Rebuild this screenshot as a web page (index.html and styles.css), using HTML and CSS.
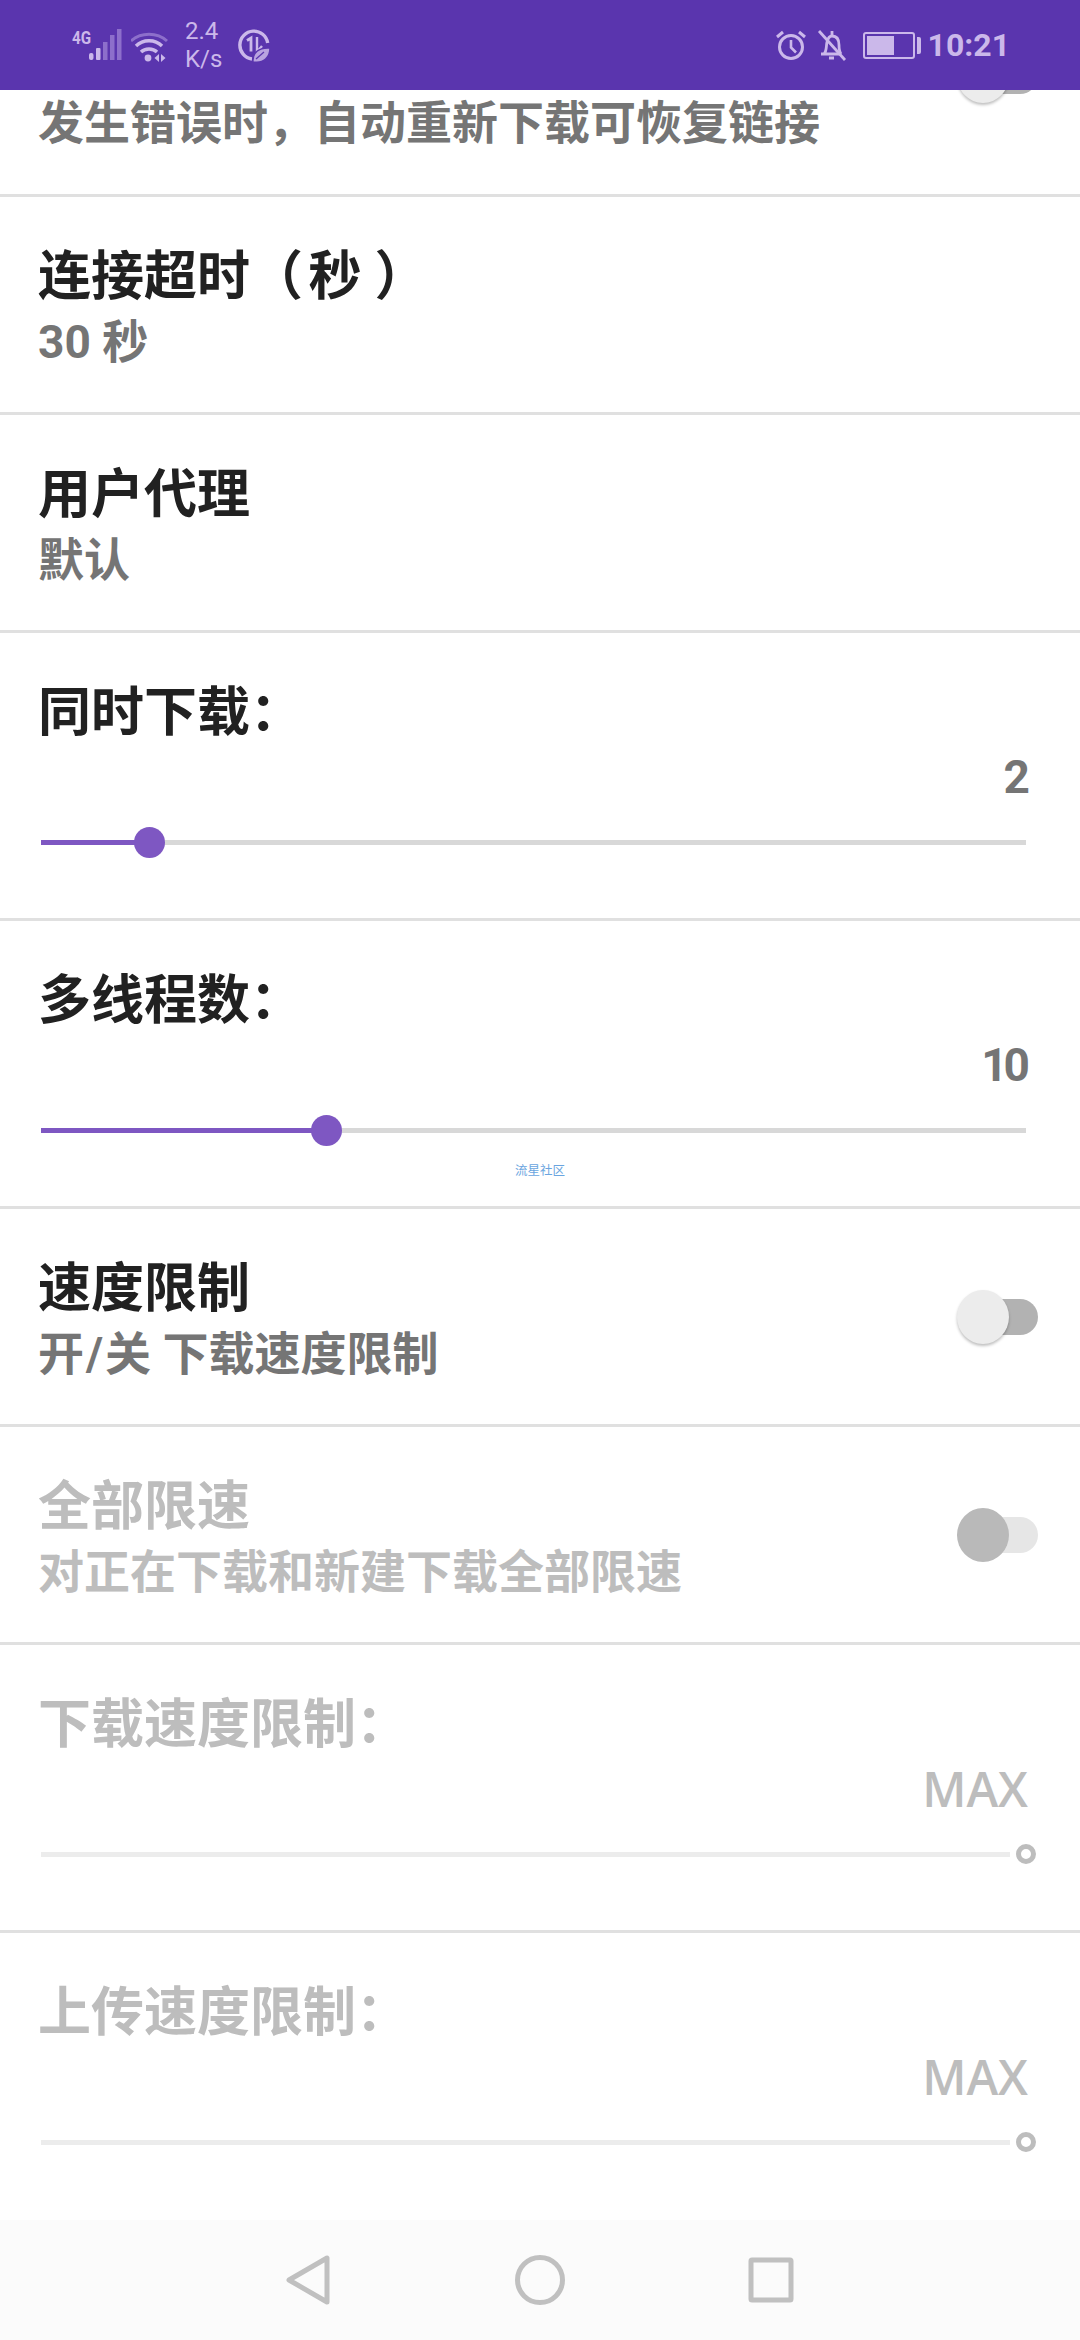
FILE: index.html
```html
<!DOCTYPE html>
<html lang="zh-CN">
<head>
  <meta charset="UTF-8">
  <title>下载设置</title>
  <meta name="viewport" content="width=device-width,initial-scale=1">
  <link rel="stylesheet" href="styles.css">
</head>
<body>
  <header class="status">
    <div class="status-left">
      <span class="net">4G</span>
      <svg class="signal" width="34" height="34" viewBox="0 0 34 34">
        <rect x="0" y="25" width="4.500" height="7" rx="2" fill="#cbb8ea"/>
        <rect x="7" y="20" width="4.500" height="12" rx="1" fill="#cbb8ea"/>
        <rect x="14" y="14" width="4.500" height="18" fill="#8d6fcb"/>
        <rect x="21" y="7" width="4.500" height="25" fill="#8d6fcb"/>
        <rect x="28" y="1" width="4.500" height="31" fill="#8d6fcb"/>
      </svg>
      <svg class="wifi" width="38" height="34" viewBox="0 0 38 34" fill="none">
        <path d="M0 11C10 2 26 2 36 11" stroke="#8d6fcb" stroke-width="3"/>
        <path d="M5 16C12 9 24 9 31 16" stroke="#cbb8ea" stroke-width="3.400"/>
        <path d="M10 22C14 18 22 18 26 22" stroke="#cbb8ea" stroke-width="3.400"/>
        <circle cx="17" cy="28" r="3.400" fill="#cbb8ea"/>
        <path d="M28 24v8l-4.500-4zM30 24v8l4.500-4z" fill="#cbb8ea"/>
      </svg>
      <div class="speed"><span>2.4</span><span>K/s</span></div>
      <svg class="saver" width="32" height="34" viewBox="0 0 32 34" fill="none">
        <path d="M14 30A14 14 0 1 1 29.700 14" stroke="#cbb8ea" stroke-width="3.400"/>
        <path d="M9 11.500l4-2.500v13.500" stroke="#cbb8ea" stroke-width="2.800"/>
        <path d="M19 8v15l5-6" stroke="#cbb8ea" stroke-width="2.400"/>
        <path d="M15 33c-1-9 6-15 17-14 0 9-6 16-17 14z" fill="#b9a3e0" stroke="#5a35ae" stroke-width="1.500"/>
        <path d="M18 30l8-7" stroke="#5a35ae" stroke-width="1.200"/>
      </svg>
    </div>
    <div class="status-right">
      <svg width="32" height="32" viewBox="0 0 32 32" fill="none" stroke="#cbb8ea">
        <circle cx="16" cy="18" r="11.500" stroke-width="3"/>
        <path d="M16 11v7.500l5 5" stroke-width="2.600"/>
        <path d="M2 8l6-5M30 8l-6-5" stroke-width="3"/>
      </svg>
      <svg class="bell" width="30" height="32" viewBox="0 0 30 32" fill="none" stroke="#cbb8ea">
        <path d="M4 25h20M7 25c3-3 2-8 3-12 1-4 3-6 5-6 5 0 7 4 7 9 0 4 0 6 2 9" stroke-width="2.800"/>
        <path d="M12 29h5M15 2v4" stroke-width="2.800"/>
        <path d="M2 2l26 29" stroke-width="2.800"/>
      </svg>
      <div class="battery"><div class="battery-body"><div class="battery-level"></div></div><div class="battery-nub"></div></div>
      <span class="clock">10:21</span>
    </div>
  </header>

  <main class="list">
    <section class="row row-cut">
      <div class="row-text"><p class="sub">发生错误时，自动重新下载可恢复链接</p></div>
      <div class="switch switch-off"></div>
    </section>
    <section class="row">
      <div class="row-text"><h2 class="title">连接超时（&#8202;秒 ）</h2><p class="sub">30 秒</p></div>
    </section>
    <section class="row">
      <div class="row-text"><h2 class="title">用户代理</h2><p class="sub">默认</p></div>
    </section>
    <section class="slider-row">
      <h2 class="title">同时下载：</h2>
      <div class="value">2</div>
      <div class="track"><div class="fill" style="width:11.1%"></div></div>
    </section>
    <section class="slider-row">
      <h2 class="title">多线程数：</h2>
      <div class="value">10</div>
      <div class="track"><div class="fill" style="width:29%"></div></div>
      <span class="watermark">流星社区</span>
    </section>
    <section class="row">
      <div class="row-text"><h2 class="title">速度限制</h2><p class="sub">开<span class="slash">/</span>关 下载速度限制</p></div>
      <div class="switch switch-off"></div>
    </section>
    <section class="row disabled">
      <div class="row-text"><h2 class="title">全部限速</h2><p class="sub">对正在下载和新建下载全部限速</p></div>
      <div class="switch switch-dim"></div>
    </section>
    <section class="slider-row disabled">
      <h2 class="title">下载速度限制：</h2>
      <div class="value value-max">MAX</div>
      <div class="track track-end"><div class="ring"></div></div>
    </section>
    <section class="slider-row disabled last">
      <h2 class="title">上传速度限制：</h2>
      <div class="value value-max">MAX</div>
      <div class="track track-end"><div class="ring"></div></div>
    </section>
  </main>

  <nav class="navbar">
    <svg width="50" height="50" viewBox="0 0 50 50" fill="none" stroke="#c0c0c0" stroke-width="5" stroke-linejoin="round">
      <path d="M5 25L43 3V47z"/>
    </svg>
    <svg width="50" height="50" viewBox="0 0 50 50" fill="none" stroke="#c0c0c0" stroke-width="5">
      <circle cx="25" cy="25" r="22.500"/>
    </svg>
    <svg width="50" height="50" viewBox="0 0 50 50" fill="none" stroke="#c0c0c0" stroke-width="5" stroke-linejoin="round">
      <rect x="5" y="5" width="40" height="40" rx="1"/>
    </svg>
  </nav>
</body>
</html>
```

FILE: styles.css
```css
*{box-sizing:border-box}
html,body{margin:0;padding:0}
body{width:1080px;height:2340px;display:flex;flex-direction:column;background:#fff;overflow:hidden;font-family:Roboto,"Noto Sans CJK SC",sans-serif}

.status{height:90px;flex:none;background:#5a35ae;color:#cbb8ea;display:flex;align-items:center;justify-content:space-between;padding:0 70px 0 72px}
.status-left,.status-right{display:flex;align-items:center}
.net{font-size:19px;font-weight:700;line-height:18px;width:17px;margin-top:-14px;transform:scaleX(.8);transform-origin:left center}
.wifi{margin:4px 0 0 8px}
.speed{display:flex;flex-direction:column;font-size:24px;line-height:28px;margin-left:16px;width:36px}
.saver{margin:2px 0 0 17px}
.bell{margin-left:10px}
.battery{display:flex;align-items:center;margin-left:16px}
.battery-body{width:52px;height:27px;border:2px solid #cbb8ea;border-radius:3px;padding:2px}
.battery-level{width:27px;height:100%;background:#cbb8ea}
.battery-nub{width:4px;height:17px;background:#cbb8ea;border-radius:0 2px 2px 0;margin-left:2px}
.clock{font-size:32px;font-weight:700;margin-left:7px}

.list{flex:1;overflow:hidden}
.row{height:218px;border-bottom:3px solid #e0e0e0;display:flex;align-items:center;justify-content:space-between;padding:0 42px 0 38px}
.row-text{padding-top:6px}
.row-cut{height:107px;overflow:hidden;align-items:flex-start}
.row-cut .row-text{padding-top:3px}
.row-cut .switch{margin-top:-41px}
.title{margin:0;font-size:53px;line-height:70px;font-weight:700;color:#212121;white-space:pre}
.sub{margin:-1px 0 0;font-size:46px;line-height:62px;font-weight:700;color:#757575}
.slash{padding:0 2px}

.switch{width:81px;height:54px;position:relative;flex:none}
.switch::before{content:"";position:absolute;right:0;top:9px;width:66px;height:36px;border-radius:18px}
.switch::after{content:"";position:absolute;left:0;top:0;width:52px;height:54px;border-radius:50%}
.switch-off::before{background:#b2b2b2}
.switch-off::after{background:#ececec;box-shadow:0 2px 3px rgba(0,0,0,.25)}
.switch-dim::before{background:#e6e6e6}
.switch-dim::after{background:#b9b9b9}

.slider-row{height:288px;border-bottom:3px solid #e0e0e0;padding:45px 54px 0 41px;position:relative}
.slider-row .title{margin-left:-3px}
.value{font-size:46px;line-height:54px;font-weight:700;letter-spacing:-4px;color:#757575;text-align:right;margin:2px 0 0}
.value-max{font-family:"Open Sans",Roboto,sans-serif;font-size:48px;font-weight:600;letter-spacing:0;color:#bdbdbd;margin-right:-2px}
.track{height:5px;background:#d8d8d8;margin-top:36px;position:relative}
.fill{height:100%;background:#7e57c2;position:relative}
.fill::after{content:"";position:absolute;right:-15px;top:-13px;width:31px;height:31px;border-radius:50%;background:#7e57c2}
.track-end{background:#ececec;margin-right:16px}
.ring{position:absolute;right:-26px;top:-8px;width:20px;height:20px;border:5px solid #bdbdbd;border-radius:50%;background:#fff}
.watermark{position:absolute;left:515px;top:242px;font-size:12.500px;line-height:16px;color:#6aa5e0}

.disabled .title,.disabled .sub{color:#bdbdbd}
.last{border-bottom:none}

.navbar{height:120px;flex:none;background:#fbfbfb;display:flex;align-items:center;justify-content:center;gap:181px}
```
